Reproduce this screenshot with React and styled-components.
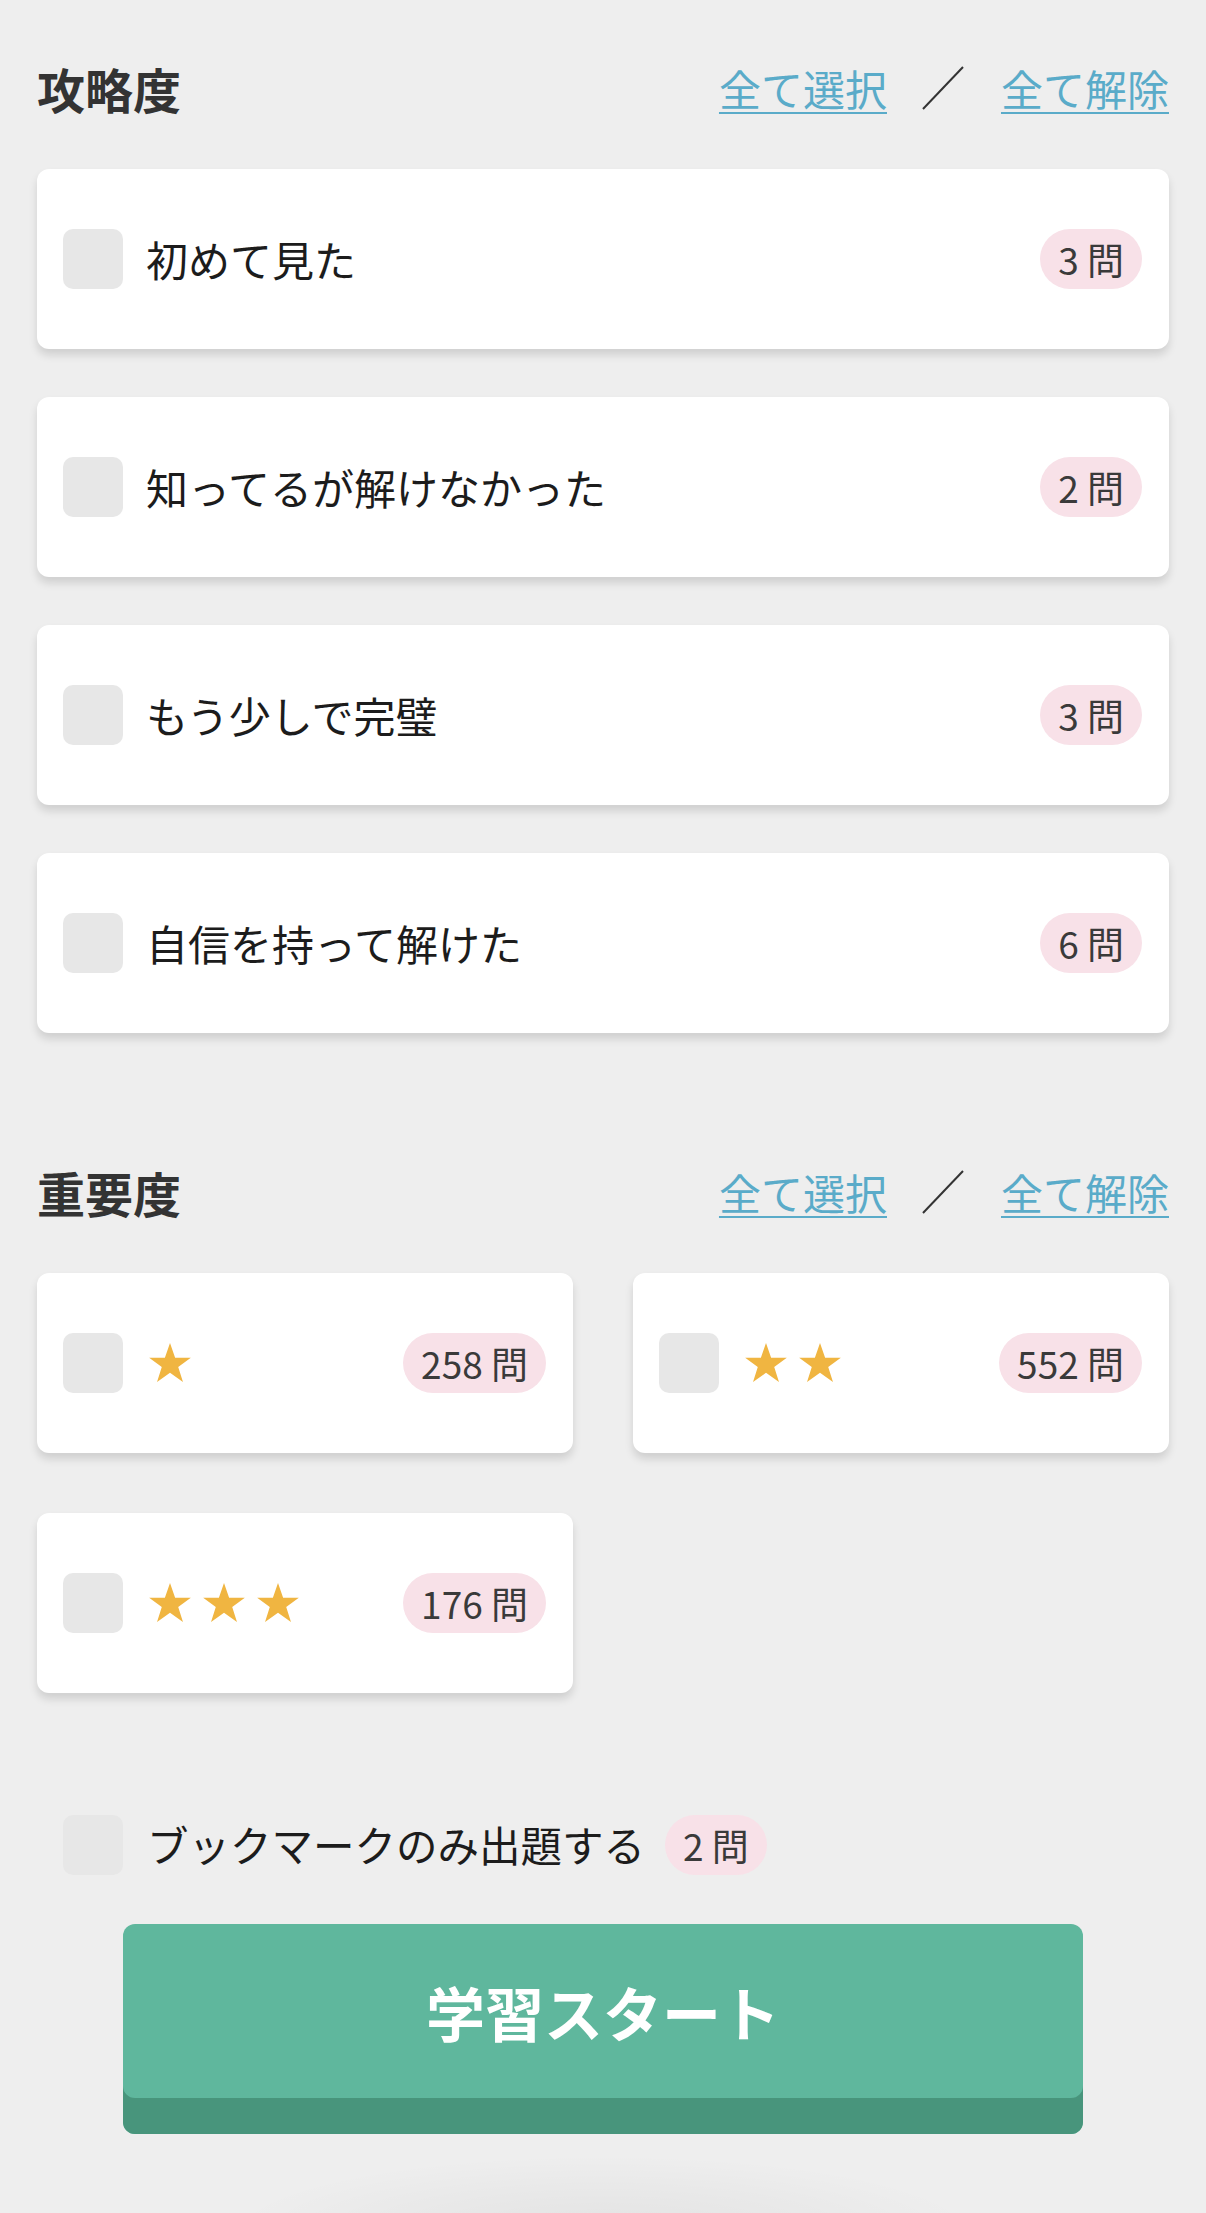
import React from 'react';
import styled, { createGlobalStyle } from 'styled-components';

const GlobalStyle = createGlobalStyle`
  html, body {
    margin: 0;
    padding: 0;
    background: #eeeeee;
  }
  body {
    font-family: "Noto Sans CJK JP", "Noto Sans", sans-serif;
    color: #1f1f1f;
  }
`;

const Page = styled.div`
  width: 1206px;
  min-height: 2213px;
  box-sizing: border-box;
  padding: 58px 37px 0;
  display: flex;
  flex-direction: column;
  overflow: hidden;
`;

const SectionHeader = styled.div`
  height: 60px;
  display: flex;
  align-items: center;
  justify-content: space-between;
  margin-top: ${(props) => props.$top || 0}px;
`;

const Title = styled.h2`
  margin: 0;
  font-size: 48px;
  font-weight: 700;
  color: #333333;
  line-height: 1;
`;

const Links = styled.div`
  display: flex;
  align-items: center;
  font-size: 42px;
  line-height: 1;
`;

const TextLink = styled.a`
  color: #5aabc9;
  text-decoration: underline;
  text-underline-offset: 6px;
  text-decoration-thickness: 2px;
  cursor: pointer;
`;

const Slash = styled.svg`
  margin: 0 37px 0 35px;
  flex: none;
`;

const List = styled.div`
  display: flex;
  flex-direction: column;
  gap: 48px;
  margin-top: 51px;
`;

const Grid = styled.div`
  display: grid;
  grid-template-columns: 536px 536px;
  column-gap: 60px;
  row-gap: 60px;
  margin-top: 51px;
`;

const Card = styled.label`
  height: 180px;
  box-sizing: border-box;
  padding: 0 27px 0 26px;
  background: #ffffff;
  border-radius: 12px;
  box-shadow: 0 6px 8px rgba(0, 0, 0, 0.13);
  display: flex;
  align-items: center;
`;

const Box = styled.span`
  width: 60px;
  height: 60px;
  flex: none;
  border-radius: 10px;
  background: #e7e7e7;
`;

const Label = styled.span`
  margin-left: 23px;
  font-size: 42px;
  line-height: 1;
  color: #1c1c1c;
  flex: 1;
`;

const Badge = styled.span`
  height: 60px;
  padding: 0 18px;
  border-radius: 30px;
  background: #f8e1e8;
  color: #3a3a3a;
  font-size: 37px;
  display: inline-flex;
  align-items: center;
  flex: none;
  margin-left: ${(props) => props.$gap || 0}px;
`;

const Stars = styled.span`
  margin-left: 25px;
  flex: 1;
  display: flex;
  gap: 10px;
`;

const BookmarkRow = styled.label`
  margin-top: 122px;
  padding-left: 26px;
  display: flex;
  align-items: center;
  height: 60px;
`;

const BookmarkText = styled.span`
  margin-left: 24px;
  font-size: 41.5px;
  line-height: 1;
  color: #1c1c1c;
`;

const ButtonWrap = styled.div`
  margin-top: 49px;
  display: flex;
  justify-content: center;
  position: relative;
`;

const Glow = styled.div`
  position: absolute;
  top: 230px;
  left: 50%;
  transform: translateX(-50%);
  width: 760px;
  height: 160px;
  border-radius: 50%;
  background: radial-gradient(ellipse at center, rgba(0, 0, 0, 0.05) 0%, rgba(0, 0, 0, 0.02) 45%, rgba(0, 0, 0, 0) 70%);
`;

const StartButton = styled.button`
  width: 960px;
  height: 210px;
  border: none;
  border-radius: 12px;
  background: #5fb79d;
  box-shadow: inset 0 -36px 0 #48957c;
  padding: 0 0 36px;
  color: #ffffff;
  font-family: "Noto Sans CJK JP", sans-serif;
  font-size: 59px;
  font-weight: 700;
  cursor: pointer;
  position: relative;
  z-index: 1;
`;

function Star() {
  return (
    <svg width="44" height="42" viewBox="0 0 24 23">
      <path d="M12 0.5l2.8 8.1h8.6l-6.9 5.1 2.6 8.2L12 16.9l-7.1 5 2.6-8.2L0.6 8.6h8.6z" fill="#f0b541" />
    </svg>
  );
}

const clearItems = [
  { label: '初めて見た', count: 3 },
  { label: '知ってるが解けなかった', count: 2 },
  { label: 'もう少しで完璧', count: 3 },
  { label: '自信を持って解けた', count: 6 },
];

const levelItems = [
  { stars: 1, count: 258 },
  { stars: 2, count: 552 },
  { stars: 3, count: 176 },
];

function Header({ title, top }) {
  return (
    <SectionHeader $top={top}>
      <Title>{title}</Title>
      <Links>
        <TextLink>全て選択</TextLink>
        <Slash width="42" height="44" viewBox="0 0 42 44">
          <line x1="1" y1="43" x2="41" y2="1" stroke="#333" strokeWidth="2" />
        </Slash>
        <TextLink>全て解除</TextLink>
      </Links>
    </SectionHeader>
  );
}

export default function App() {
  return (
    <>
      <GlobalStyle />
      <Page>
        <Header title="攻略度" />
        <List>
          {clearItems.map((item) => (
            <Card key={item.label}>
              <Box />
              <Label>{item.label}</Label>
              <Badge>{item.count} 問</Badge>
            </Card>
          ))}
        </List>

        <Header title="重要度" top={129} />
        <Grid>
          {levelItems.map((item) => (
            <Card key={item.stars}>
              <Box />
              <Stars>
                {Array.from({ length: item.stars }).map((_, i) => (
                  <Star key={i} />
                ))}
              </Stars>
              <Badge>{item.count} 問</Badge>
            </Card>
          ))}
        </Grid>

        <BookmarkRow>
          <Box />
          <BookmarkText>ブックマークのみ出題する</BookmarkText>
          <Badge $gap={20}>2 問</Badge>
        </BookmarkRow>

        <ButtonWrap>
          <Glow />
          <StartButton>学習スタート</StartButton>
        </ButtonWrap>
      </Page>
    </>
  );
}
